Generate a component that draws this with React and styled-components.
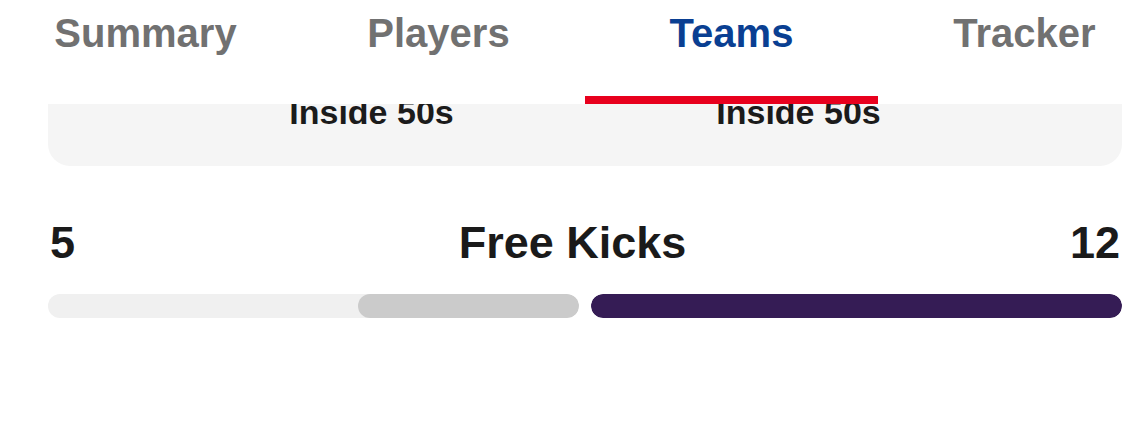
import React from "react";
import styled, { createGlobalStyle } from "styled-components";

const Global = createGlobalStyle`
  html, body { margin: 0; padding: 0; background: #fff; overflow: hidden; }
  body { font-family: "Liberation Sans", Arial, sans-serif; }
`;

const Page = styled.div`
  width: 1139px;
  height: 426px;
  display: flex;
  flex-direction: column;
  overflow: hidden;
`;

const Header = styled.nav`
  position: relative;
  z-index: 2;
  flex: none;
  height: 104px;
  background: #fff;
  display: grid;
  grid-template-columns: repeat(4, 293px);
  margin-left: -1px;
`;

const Tab = styled.div`
  position: relative;
  text-align: center;
  padding-top: 10px;
  font-size: 40px;
  line-height: 46px;
  font-weight: 700;
  color: ${(p) => (p.$active ? "#0a3f92" : "#717171")};
  ${(p) =>
    p.$active &&
    `&::after {
      content: "";
      position: absolute;
      left: 0; right: 0; bottom: 0;
      height: 8px;
      background: #e8001d;
    }`}
`;

const Scroll = styled.div`
  flex: 1;
  overflow: hidden;
`;

const Content = styled.div`
  margin-top: -32px;
  padding: 0 17px 0 48px;
  display: flex;
  flex-direction: column;
`;

const Card = styled.div`
  background: #f5f5f5;
  border-radius: 0 0 22px 22px;
  padding: 20px 110px 34px;
  display: grid;
  grid-template-columns: 1fr 1fr;
`;

const CardLabel = styled.div`
  text-align: center;
  font-size: 34px;
  line-height: 40px;
  font-weight: 700;
  color: #1b1b1b;
`;

const Stat = styled.section`
  margin-top: ${(p) => p.$gap}px;
  display: flex;
  flex-direction: column;
  gap: 26px;
`;

const StatHead = styled.div`
  display: flex;
  justify-content: space-between;
  align-items: baseline;
  font-size: 45px;
  line-height: 50px;
  font-weight: 700;
  color: #1a1a1a;
  padding: 0 2px;
`;

const Bars = styled.div`
  display: grid;
  grid-template-columns: 1fr 1fr;
  gap: 12px;
`;

const Track = styled.div`
  height: 24px;
  border-radius: 12px;
  background: #f0f0f0;
  display: flex;
  justify-content: ${(p) => (p.$side === "left" ? "flex-end" : "flex-start")};
  overflow: hidden;
`;

const Fill = styled.div`
  height: 100%;
  border-radius: 12px;
  background: ${(p) => p.$color};
`;

const stats = [
  { label: "Free Kicks", home: 5, away: 12, gap: 52 },
  { label: "Hitouts", home: 6, away: 7, gap: 100 },
];

function StatRow({ label, home, away, gap }) {
  const max = Math.max(home, away);
  return (
    <Stat $gap={gap}>
      <StatHead>
        <span>{home}</span>
        <span>{label}</span>
        <span>{away}</span>
      </StatHead>
      <Bars>
        <Track $side="left">
          <Fill $color="#cbcbcb" style={{ width: `${(home / max) * 100}%` }} />
        </Track>
        <Track $side="right">
          <Fill $color="#351c55" style={{ width: `${(away / max) * 100}%` }} />
        </Track>
      </Bars>
    </Stat>
  );
}

export default function App() {
  return (
    <Page>
      <Global />
      <Header>
        <Tab>Summary</Tab>
        <Tab>Players</Tab>
        <Tab $active>Teams</Tab>
        <Tab>Tracker</Tab>
      </Header>
      <Scroll>
        <Content>
          <Card>
            <CardLabel>Inside 50s</CardLabel>
            <CardLabel>Inside 50s</CardLabel>
          </Card>
          {stats.map((s) => (
            <StatRow key={s.label} {...s} />
          ))}
        </Content>
      </Scroll>
    </Page>
  );
}
